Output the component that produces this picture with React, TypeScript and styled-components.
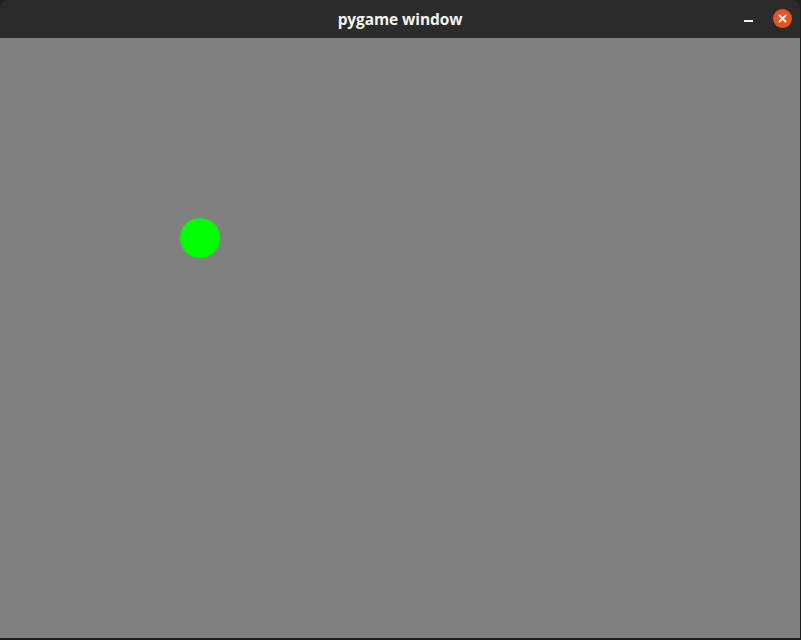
import React from "react";
import styled, { createGlobalStyle } from "styled-components";

const GlobalStyle = createGlobalStyle`
  html, body {
    margin: 0;
    padding: 0;
    background: #1e1e1e;
    overflow: hidden;
  }
`;

const Screen = styled.div`
  width: 801px;
  height: 640px;
  display: flex;
  flex-direction: column;
  background: #1e1e1e;
`;

const Window = styled.div`
  width: 800px;
  height: 638px;
  display: flex;
  flex-direction: column;
  border-radius: 8px 8px 0 0;
  overflow: hidden;
  background: #2b2b2b;
`;

const TitleBar = styled.div`
  height: 38px;
  flex-shrink: 0;
  display: grid;
  grid-template-columns: 1fr auto 1fr;
  align-items: center;
  background: #2b2b2b;
  border-bottom: 1px solid #262626;
  box-sizing: border-box;
`;

const Title = styled.div`
  grid-column: 2;
  font-family: "Open Sans", "DejaVu Sans", sans-serif;
  font-weight: 700;
  font-size: 15.5px;
  color: #f2f2f2;
  letter-spacing: -0.1px;
  padding-top: 1px;
`;

const Controls = styled.div`
  grid-column: 3;
  justify-self: end;
  display: flex;
  align-items: center;
  gap: 20px;
  padding-right: 8px;
`;

const MinimizeButton = styled.div`
  width: 9px;
  height: 2px;
  margin-top: 4px;
  background: #f0f0f0;
`;

const CloseButton = styled.div`
  width: 19px;
  height: 19px;
  border-radius: 50%;
  background: #e95420;
  display: flex;
  align-items: center;
  justify-content: center;
`;

const Canvas = styled.div`
  flex: 1;
  position: relative;
  background: #808080;
`;

const Ball = styled.div<{ $x: number; $y: number; $r: number }>`
  position: absolute;
  left: ${(p) => p.$x - p.$r}px;
  top: ${(p) => p.$y - p.$r}px;
  width: ${(p) => p.$r * 2}px;
  height: ${(p) => p.$r * 2}px;
  border-radius: 50%;
  background: #00ff00;
`;

const App = () => {
  return (
    <>
      <GlobalStyle />
      <Screen>
        <Window>
          <TitleBar>
            <Title>pygame window</Title>
            <Controls>
              <MinimizeButton />
              <CloseButton>
                <svg width="9" height="9" viewBox="0 0 9 9">
                  <path
                    d="M1.5 1.5 L7.5 7.5 M7.5 1.5 L1.5 7.5"
                    stroke="#ffffff"
                    strokeWidth="2"
                    strokeLinecap="round"
                  />
                </svg>
              </CloseButton>
            </Controls>
          </TitleBar>
          <Canvas>
            <Ball $x={200} $y={200} $r={20} />
          </Canvas>
        </Window>
      </Screen>
    </>
  );
};

export default App;
